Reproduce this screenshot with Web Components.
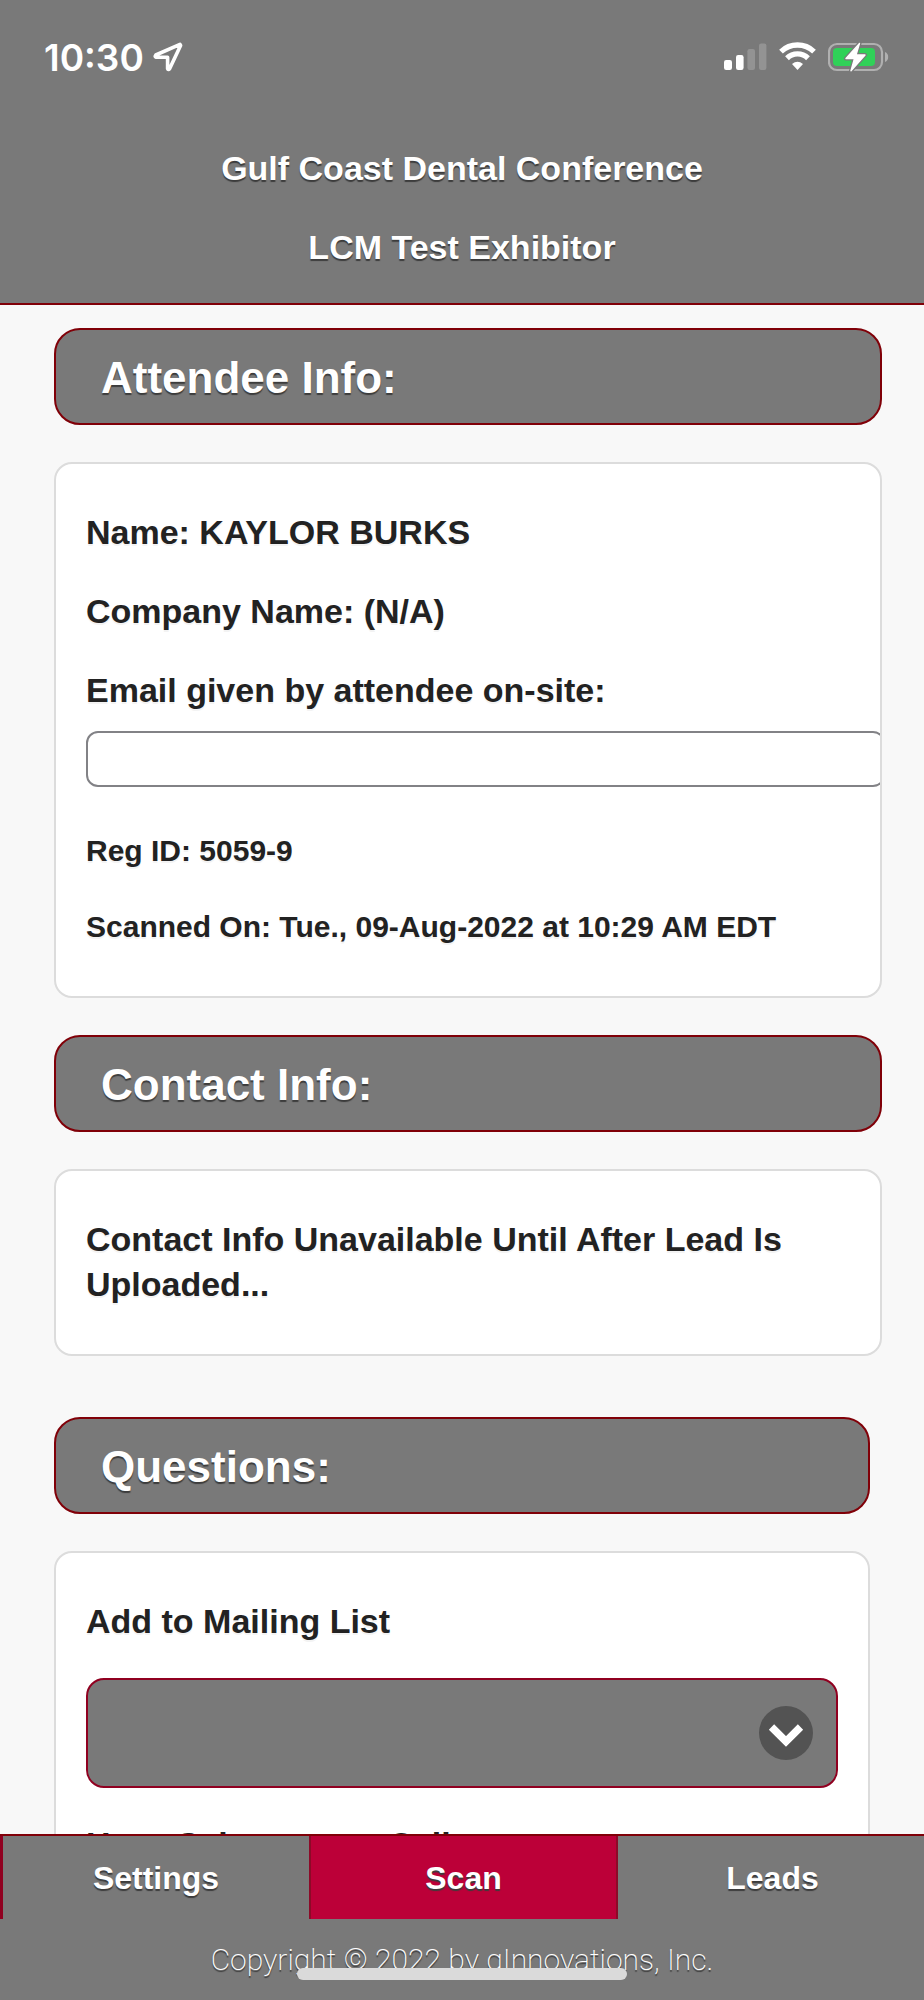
<!DOCTYPE html>
<html lang="en">
<head>
<meta charset="utf-8">
<meta name="viewport" content="width=device-width, initial-scale=1">
<title>Gulf Coast Dental Conference</title>
<style>
  :root {
    --bar: #797979;
    --rule: #800008;
    --accent: #bc0038;
    --accent-dark: #900020;
    --shadow: 0 2px 1px #3c3c3c;
  }

  body {
    margin: 0;
    height: 100vh;
    display: flex;
    flex-direction: column;
    background: #f8f8f8;
    color: #222;
    font: bold 34px/45px "Liberation Sans", Arial, sans-serif;
  }

  main {
    flex: 1;
    min-height: 0;
    overflow-y: auto;
    scrollbar-width: none;
    padding: 23px 42px 0 54px;
    box-sizing: border-box;
  }
</style>
</head>
<body>
  <app-header>
    <status-bar slot="status">10:30</status-bar>
    <span>Gulf Coast Dental Conference</span>
    <span>LCM Test Exhibitor</span>
  </app-header>

  <main>
    <info-section heading="Attendee Info:">
      <info-line>Name: KAYLOR BURKS</info-line>
      <info-line>Company Name: (N/A)</info-line>
      <text-field label="Email given by attendee on-site:"></text-field>
      <info-line small>Reg ID: 5059-9</info-line>
      <info-line small>Scanned On: Tue., 09-Aug-2022 at 10:29 AM EDT</info-line>
    </info-section>

    <info-section heading="Contact Info:">
      <info-line>Contact Info Unavailable Until After Lead Is Uploaded...</info-line>
    </info-section>

    <info-section heading="Questions:" form>
      <select-field label="Add to Mailing List"></select-field>
      <select-field label="Have Salesperson Call"></select-field>
    </info-section>
  </main>

  <app-footer>
    <tab-item slot="tabs" href="#settings">Settings</tab-item>
    <tab-item slot="tabs" href="#scan" active>Scan</tab-item>
    <tab-item slot="tabs" href="#leads">Leads</tab-item>
    Copyright © 2022 by qInnovations, Inc.
  </app-footer>

<script>
/**
 * Base class: attaches an open shadow root and fills it from template().
 */
class BaseElement extends HTMLElement {
  constructor() {
    super();
    this.attachShadow({ mode: "open" });
  }

  connectedCallback() {
    this.shadowRoot.innerHTML = this.template();
  }
}

/**
 * Phone status bar. The clock is slotted, the icons are inline SVG.
 */
class StatusBar extends BaseElement {
  template() {
    return `
      <style>
        :host {
          display: flex;
          align-items: center;
          height: 114px;
          padding: 0 35px 0 44px;
          font: 600 37px/45px Inter, sans-serif;
        }
        svg { display: block; flex: none; }
        .location { margin-left: 9px; }
        .icons { display: flex; gap: 12px; margin-left: auto; }
      </style>
      <slot></slot>
      <svg class="location" width="30" height="30" viewBox="0 0 30 30" fill="none" stroke="#fff" stroke-width="3.6" stroke-linejoin="round">
        <path d="M27 2.4 L2.8 13 Q1.4 14.8 3 15.2 H14.6 V26.6 Q15.2 28.4 16.6 26.8 L27.6 3.4 Z"/>
      </svg>
      <div class="icons">
        <svg width="43" height="30" viewBox="0 0 43 30" fill="#fff">
          <rect x="0" y="18" width="8" height="10" rx="2.2"/>
          <rect x="12" y="13" width="7.6" height="15" rx="2.2"/>
          <rect x="23.4" y="7" width="7.6" height="21" rx="2.2" opacity=".2"/>
          <rect x="35" y="1.4" width="7.4" height="26.6" rx="2.2" opacity=".2"/>
        </svg>
        <svg width="37" height="30" viewBox="0 0 37 30" fill="none" stroke="#fff" stroke-width="5.4">
          <path d="M2 9.6 A24 24 0 0 1 35 9.6"/>
          <path d="M8 16.2 A15 15 0 0 1 29 16.2"/>
          <path d="M13 22 Q18.5 17.4 24 22 L18.5 28 Z" fill="#fff" stroke="none"/>
        </svg>
        <svg width="61" height="30" viewBox="0 0 61 30">
          <rect x="1" y="2" width="53" height="26" rx="8" fill="none" stroke="#b0b0b0" stroke-width="2.2"/>
          <path d="M57 10 a5.5 5.5 0 0 1 0 10 Z" fill="#b0b0b0"/>
          <rect x="5" y="6" width="42" height="18" rx="4" fill="#30d158"/>
          <path d="M31.5 1.4 L18 16.5 h8.5 L23 28.8 L37 13 h-9 Z" fill="#fff" stroke="#797979" stroke-width="4" stroke-linejoin="round"/>
          <path d="M31.5 1.4 L18 16.5 h8.5 L23 28.8 L37 13 h-9 Z" fill="#fff" stroke="#fff" stroke-width="1.4" stroke-linejoin="round"/>
        </svg>
      </div>
    `;
  }
}

/**
 * Page header: status bar on top, then centered title lines.
 */
class AppHeader extends BaseElement {
  template() {
    return `
      <style>
        :host {
          display: block;
          flex: none;
          background: var(--bar);
          color: #fff;
          border-bottom: 2px solid var(--rule);
        }
        header {
          display: flex;
          flex-direction: column;
          align-items: center;
          gap: 34px;
          padding: 32px 24px 33px;
          text-shadow: var(--shadow);
        }
      </style>
      <slot name="status"></slot>
      <header><slot></slot></header>
    `;
  }
}

class InfoSection extends BaseElement {
  template() {
    return `
      <style>
        :host { display: block; margin-bottom: 37px; }
        :host([form]) { margin: 61px 12px 0 0; }
        h2 {
          margin: 0 0 37px;
          padding: 18px 45px 16px;
          border: 2px solid var(--rule);
          border-radius: 26px;
          background: var(--bar);
          color: #fff;
          font-size: 44px;
          line-height: 59px;
          text-shadow: var(--shadow);
        }
        .card {
          display: flow-root;
          padding: 12px 30px 13px;
          border: 2px solid #dcdcdc;
          border-radius: 18px;
          background: #fff;
          text-shadow: 0 2px 0 #f3f3f3;
          overflow: hidden;
        }
      </style>
      <h2>${this.getAttribute("heading")}</h2>
      <div class="card"><slot></slot></div>
    `;
  }
}

/**
 * One line of text in a card.
 */
class InfoLine extends BaseElement {
  template() {
    return `
      <style>
        :host { display: block; margin: 34px 0; }
        :host([small]) { margin: 37px 0; font-size: 30px; line-height: 39px; }
      </style>
      <slot></slot>
    `;
  }
}

/**
 * Label with an email input under it. The input runs past the card's edge.
 */
class TextField extends BaseElement {
  template() {
    return `
      <style>
        :host { display: block; margin: 34px 0 44px; }
        label { display: block; margin-bottom: 18px; }
        input {
          display: block;
          box-sizing: border-box;
          width: calc(100% + 35px);
          height: 56px;
          padding: 0 16px;
          border: 2px solid #828286;
          border-radius: 12px;
          background: #fff;
          color: inherit;
          font: inherit;
        }
      </style>
      <label for="field">${this.getAttribute("label")}</label>
      <input id="field" type="email">
    `;
  }
}

/**
 * Label with a drop-down under it.
 */
class SelectField extends BaseElement {
  template() {
    return `
      <style>
        :host { display: block; margin: 34px 0; }
        label { display: block; margin-bottom: 34px; }
        .box { display: grid; align-items: center; }
        select, svg { grid-area: 1 / 1; }
        select {
          appearance: none;
          width: 100%;
          height: 110px;
          padding: 0 100px 0 24px;
          border: 2px solid var(--accent-dark);
          border-radius: 18px;
          background: var(--bar);
          color: #fff;
          font: inherit;
        }
        svg { justify-self: end; margin-right: 25px; pointer-events: none; }
      </style>
      <label for="choice">${this.getAttribute("label")}</label>
      <div class="box">
        <select id="choice"><option></option></select>
        <svg width="54" height="54" viewBox="0 0 54 54">
          <circle cx="27" cy="27" r="27" fill="#535353"/>
          <path d="M12.5 21 L27 35.5 L41.5 21" fill="none" stroke="#fff" stroke-width="7.5"/>
        </svg>
      </div>
    `;
  }
}

class TabItem extends BaseElement {
  template() {
    return `
      <style>
        :host { display: block; flex: 1; }
        a {
          display: block;
          padding: 20px 0 18px;
          color: #fff;
          text-align: center;
          text-decoration: none;
          text-shadow: var(--shadow);
        }
        :host(:first-of-type) a { border-left: 3px solid var(--accent-dark); }
        :host([active]) a {
          background: var(--accent);
          border: solid #8c0a28;
          border-width: 0 2px;
        }
      </style>
      <a href="${this.getAttribute("href")}"><slot></slot></a>
    `;
  }
}

/**
 * Footer: tab row, copyright line and the phone's home indicator over it.
 */
class AppFooter extends BaseElement {
  template() {
    return `
      <style>
        :host {
          display: block;
          flex: none;
          position: relative;
          overflow: hidden;
          background: var(--bar);
          color: #fff;
          border-top: 2px solid var(--rule);
        }
        nav { display: flex; width: calc(100% + 3px); font-size: 32px; }
        footer {
          padding: 18px 0;
          text-align: center;
          font: 200 30px/45px Roboto, sans-serif;
          text-shadow: 0 2px 1px #3c3c3c;
        }
        .home {
          position: absolute;
          left: 50%;
          bottom: 20px;
          width: 330px;
          height: 12px;
          margin-left: -165px;
          border-radius: 6px;
          background: #dadada;
        }
      </style>
      <nav><slot name="tabs"></slot></nav>
      <footer><slot></slot></footer>
      <div class="home"></div>
    `;
  }
}

customElements.define("status-bar", StatusBar);
customElements.define("app-header", AppHeader);
customElements.define("info-section", InfoSection);
customElements.define("info-line", InfoLine);
customElements.define("text-field", TextField);
customElements.define("select-field", SelectField);
customElements.define("tab-item", TabItem);
customElements.define("app-footer", AppFooter);
</script>
</body>
</html>
